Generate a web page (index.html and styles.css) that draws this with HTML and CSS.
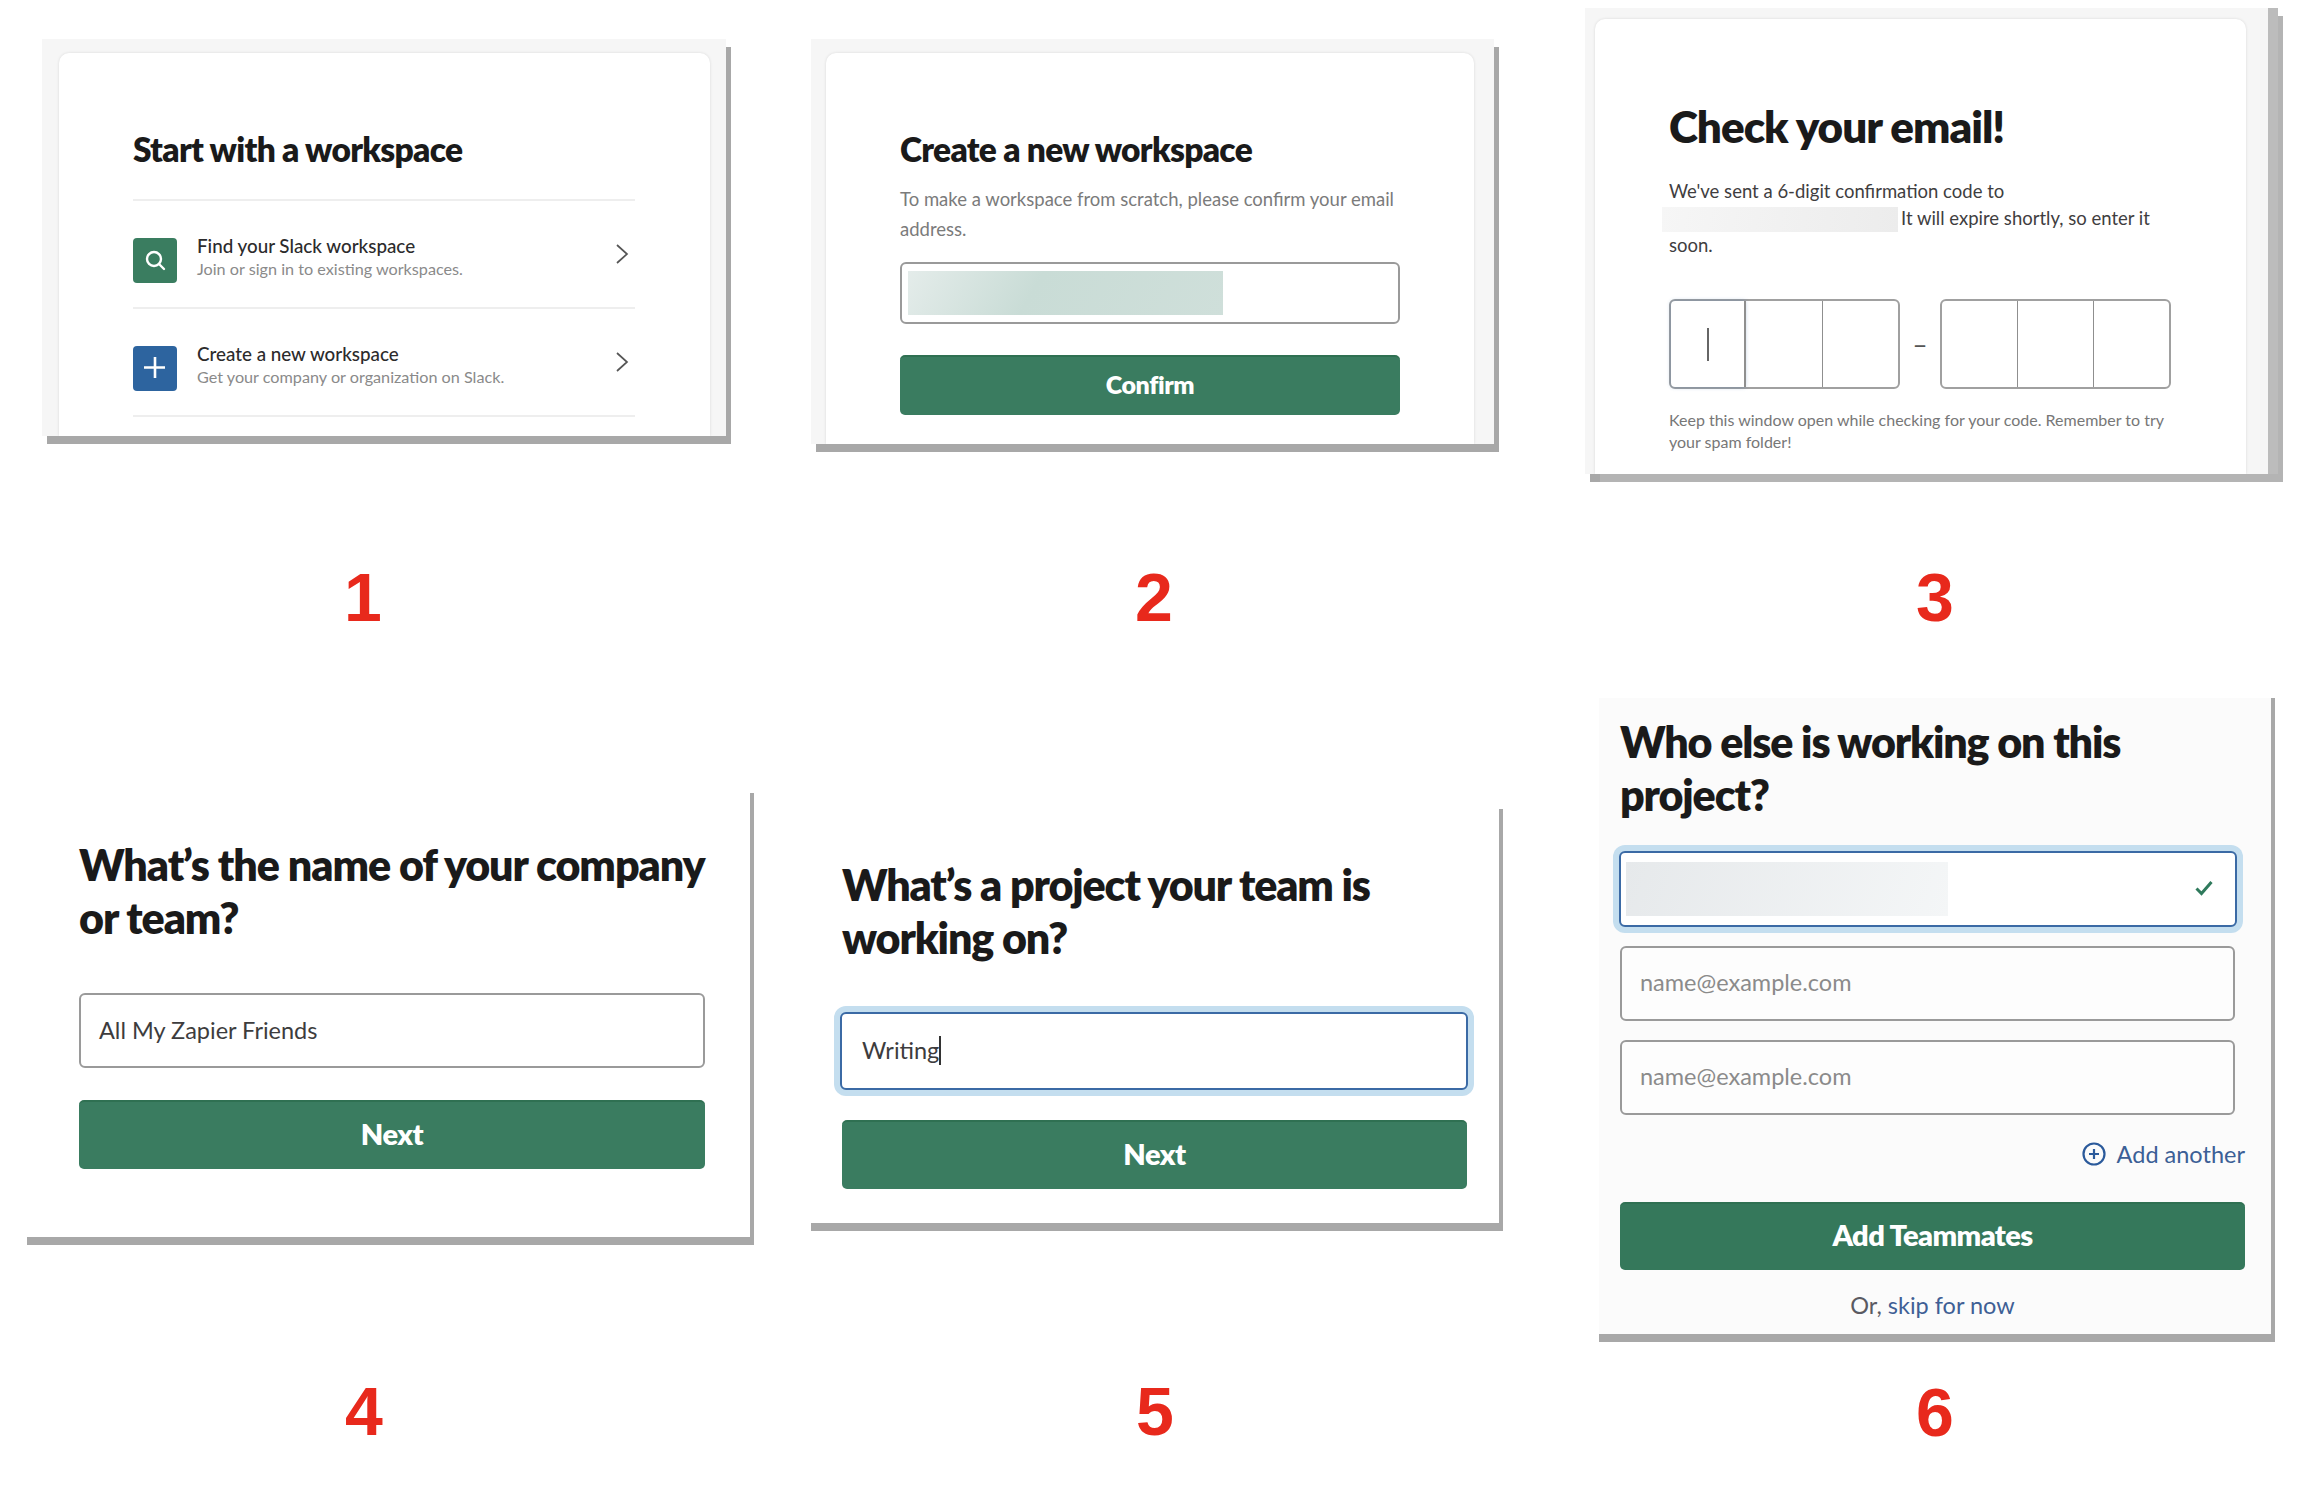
FILE: index.html
```html
<!DOCTYPE html>
<html lang="en">
<head>
    <meta charset="UTF-8">
    <title>Slack workspace sign up steps</title>
    <link rel="stylesheet" href="styles.css">
</head>
<body>
    <main class="steps">
        <section class="step step-1">
            <div class="shot shot-card">
                <div class="card">
                    <h2>Start with a workspace</h2>
                    <div class="choice">
                        <span class="choice-icon green">
                            <svg viewBox="0 0 44 44" width="44" height="44" fill="none" stroke="#fff" stroke-width="2.4" stroke-linecap="round"><circle cx="21" cy="21" r="7"/><path d="M26 26l5 5"/></svg>
                        </span>
                        <div class="choice-text">
                            <strong>Find your Slack workspace</strong>
                            <span>Join or sign in to existing workspaces.</span>
                        </div>
                        <svg class="chevron" viewBox="0 0 14 20" width="14" height="20" fill="none" stroke="#555" stroke-width="1.7"><path d="M2 1l10 9-10 9"/></svg>
                    </div>
                    <div class="choice">
                        <span class="choice-icon blue">
                            <svg viewBox="0 0 44 44" width="44" height="44" fill="none" stroke="#fff" stroke-width="2.6"><path d="M22 11v21M11 21.500h21"/></svg>
                        </span>
                        <div class="choice-text">
                            <strong>Create a new workspace</strong>
                            <span>Get your company or organization on Slack.</span>
                        </div>
                        <svg class="chevron" viewBox="0 0 14 20" width="14" height="20" fill="none" stroke="#555" stroke-width="1.7"><path d="M2 1l10 9-10 9"/></svg>
                    </div>
                </div>
            </div>
            <div class="num">1</div>
        </section>

        <section class="step step-2">
            <div class="shot shot-card">
                <div class="card">
                    <h2>Create a new workspace</h2>
                    <p class="lead">To make a workspace from scratch, please confirm your email<br>address.</p>
                    <div class="field"><span class="redact"></span></div>
                    <button class="btn">Confirm</button>
                </div>
            </div>
            <div class="num">2</div>
        </section>

        <section class="step step-3">
            <div class="shot shot-card">
                <div class="card">
                    <h2>Check your email!</h2>
                    <p class="lead">We've sent a 6-digit confirmation code to<br><span class="redact"></span>It will expire shortly, so enter it<br>soon.</p>
                    <div class="code">
                        <div class="code-group">
                            <div class="code-cell active"><i class="code-caret"></i></div>
                            <div class="code-cell"></div>
                            <div class="code-cell"></div>
                        </div>
                        <span class="code-dash">–</span>
                        <div class="code-group">
                            <div class="code-cell"></div>
                            <div class="code-cell"></div>
                            <div class="code-cell"></div>
                        </div>
                    </div>
                    <p class="note">Keep this window open while checking for your code. Remember to try<br>your spam folder!</p>
                </div>
            </div>
            <div class="num">3</div>
        </section>

        <section class="step step-4">
            <div class="shot shot-plain">
                <h2>What’s the name of your company<br>or team?</h2>
                <div class="field"><span>All My Zapier Friends</span></div>
                <button class="btn">Next</button>
            </div>
            <div class="num">4</div>
        </section>

        <section class="step step-5">
            <div class="shot shot-plain">
                <h2>What’s a project your team is<br>working on?</h2>
                <div class="field focus"><span class="typed">Writing</span></div>
                <button class="btn">Next</button>
            </div>
            <div class="num">5</div>
        </section>

        <section class="step step-6">
            <div class="shot shot-plain">
                <h2>Who else is working on this<br>project?</h2>
                <div class="field focus">
                    <span class="redact"></span>
                    <svg class="check" viewBox="0 0 18 16" width="18" height="16" fill="none" stroke="#2f7a5c" stroke-width="3"><path d="M1.500 8.500l5 5L16.500 2"/></svg>
                </div>
                <div class="field invite"><span class="placeholder">name@example.com</span></div>
                <div class="field invite"><span class="placeholder">name@example.com</span></div>
                <div class="add-row">
                    <svg viewBox="0 0 24 24" width="24" height="24" fill="none" stroke="#2b5a9b" stroke-width="2.2"><circle cx="12" cy="12" r="10.500"/><path d="M12 7v10M7 12h10"/></svg>
                    <span>Add another</span>
                </div>
                <button class="btn">Add Teammates</button>
                <p class="skip">Or, <a href="#">skip for now</a></p>
            </div>
            <div class="num">6</div>
        </section>
    </main>
</body>
</html>
```

FILE: styles.css
```css
body {
    margin: 0;
    background: #fff;
    color: #1d1c1d;
    font-family: Lato, "Open Sans", sans-serif;
}

.steps {
    display: grid;
    grid-template-columns: repeat(3, 770px);
    grid-template-rows: 680px 812px;
    width: 2310px;
    height: 1492px;
    overflow: hidden;
}

.step {
    display: flex;
    flex-direction: column;
    align-items: flex-start;
}

.num {
    color: #e8291c;
    font: bold 68px/80px "Liberation Sans", Arial, sans-serif;
}

h2 {
    margin: 0;
    font-weight: 800;
    color: #1a1a1a;
}

/* screenshot frames */
.shot {
    box-sizing: border-box;
}

.shot-card {
    padding: 14px 16px 0 17px;
    background: #f6f6f6;
    box-shadow: 5px 8px 0 #a8a8a8;
    overflow: hidden;
}

.card {
    box-sizing: border-box;
    height: 100%;
    background: #fff;
    border-radius: 10px 10px 0 0;
    box-shadow: 0 0 3px rgba(0, 0, 0, 0.12);
}

.shot-plain {
    display: flex;
    flex-direction: column;
    background: #fff;
    border-right: 4px solid #a8a8a8;
    border-bottom: 8px solid #a8a8a8;
}

/* shared controls */
.field {
    box-sizing: border-box;
    display: flex;
    align-items: center;
    border: 2px solid #9a9a9a;
    border-radius: 6px;
    background: #fff;
    color: #3d3c3d;
}

.field.focus {
    border-color: #3b6aa5;
    box-shadow: 0 0 0 6px #c4deef;
}

.btn {
    display: block;
    width: 100%;
    padding: 0 0 5px;
    border: 0;
    border-top: 2px solid #2f7052;
    border-radius: 5px;
    background: #3a7c60;
    color: #fff;
    font-family: inherit;
    font-weight: 800;
}

.redact {
    display: inline-block;
}

/* step 1 */
.step-1 .shot {
    width: 684px;
    height: 397px;
    margin: 39px 0 0 42px;
}

.step-1 .card {
    padding: 76px 75px 0 74px;
}

.step-1 h2,
.step-2 h2 {
    font-size: 33.500px;
    line-height: 40px;
    letter-spacing: -0.7px;
}

.step-1 h2 {
    padding-bottom: 30px;
    border-bottom: 2px solid #eee;
}

.choice {
    display: flex;
    box-sizing: border-box;
    height: 108px;
    padding-top: 37px;
    border-bottom: 2px solid #eee;
}

.choice-icon {
    flex: none;
    width: 44px;
    height: 45px;
    border-radius: 4px;
}

.green {
    background: #3a7d60;
}

.blue {
    background: #2d649f;
}

.choice-text {
    flex: 1;
    display: flex;
    flex-direction: column;
    margin-left: 20px;
    margin-top: -4px;
    font-size: 16.200px;
    line-height: 23px;
    color: #8a8a8a;
}

.choice-text strong {
    font-weight: 500;
    font-size: 18.800px;
    color: #2c2b2c;
}

.chevron {
    margin: 6px 6px 0 0;
}

.step-1 .num {
    margin: auto 0 43px 344px;
}

/* step 2 */
.step-2 .shot {
    width: 683px;
    height: 405px;
    margin: 39px 0 0 41px;
    padding: 14px 20px 0 15px;
}

.step-2 .card {
    padding: 76px 74px 0 74px;
}

.lead {
    margin: 0;
}

.step-2 .lead {
    margin: 15px 0 18px;
    font-size: 18.500px;
    line-height: 30px;
    color: #7b7b7b;
}

.step-2 .field {
    height: 62px;
    padding-left: 6px;
}

.step-2 .redact {
    width: 315px;
    height: 44px;
    background: linear-gradient(120deg, #e4ecea, #c9dcd6 40%, #cfdfda);
}

.step-2 .btn {
    height: 60px;
    margin-top: 31px;
    font-size: 25px;
    letter-spacing: -0.4px;
}

.step-2 .num {
    margin: auto 0 43px 365px;
}

/* step 3 */
.step-3 .shot {
    width: 683px;
    height: 466px;
    margin: 8px 0 0 45px;
    padding: 11px 22px 0 10px;
    box-shadow: 10px 0 0 #bcbcbc, 15px 8px 0 #b4b4b4, 5px 8px 0 #a8a8a8;
}

.step-3 .card {
    padding: 82px 60px 0 74px;
}

.step-3 h2 {
    font-size: 44px;
    line-height: 50px;
    letter-spacing: -1px;
}

.step-3 .lead {
    margin-top: 27px;
    font-size: 18.500px;
    line-height: 27px;
    color: #3f3e3f;
}

.step-3 .redact {
    width: 236px;
    height: 25px;
    margin: 0 3px 0 -7px;
    vertical-align: -7px;
    background: linear-gradient(100deg, #f6f6f6, #ececec);
}

.code {
    display: flex;
    align-items: center;
    margin-top: 40px;
}

.code-group {
    box-sizing: border-box;
    display: flex;
    width: 231px;
    height: 90px;
    border: 2px solid #a0a0a0;
    border-radius: 6px;
}

.code-cell {
    flex: 1;
    display: flex;
    align-items: center;
    justify-content: center;
    border-left: 1px solid #8f8f8f;
}

.code-cell:first-child {
    border-left: 0;
}

.code-cell.active {
    flex: 0 0 73px;
    border-right: 1px solid #8f8f8f;
    border-radius: 4px 0 0 4px;
    box-shadow: 0 0 4px rgba(60, 110, 170, 0.45);
}

.code-caret {
    width: 2px;
    height: 33px;
    background: #666;
}

.code-dash {
    width: 40px;
    text-align: center;
    color: #555;
    font-size: 26px;
}

.note {
    margin: 20px 0 0;
    font-size: 16px;
    line-height: 22px;
    color: #777;
}

.step-3 .num {
    margin: auto 0 43px 376px;
}

/* steps 4-6 */
.step-4 h2,
.step-5 h2,
.step-6 h2 {
    font-size: 43px;
    line-height: 53px;
    letter-spacing: -1.150px;
}

.step-4 h2 {
    letter-spacing: -1.050px;
}

.step-4 .shot,
.step-5 .shot {
    font-size: 23.500px;
}

.step-4 .field span,
.step-5 .field span {
    margin-bottom: 2px;
}

.step-6 .invite span {
    margin-bottom: 3px;
}

.step-4 .btn,
.step-5 .btn {
    height: 69px;
    font-size: 29px;
    letter-spacing: -0.5px;
}

.step-4 .shot {
    width: 727px;
    height: 452px;
    margin: 113px 0 0 27px;
    padding: 45px 45px 0 52px;
}

.step-4 .field {
    height: 75px;
    margin: 49px 0 32px;
    padding-left: 18px;
}

.step-4 .num {
    margin: auto 0 41px 345px;
}

.step-5 .shot {
    width: 692px;
    height: 422px;
    margin: 129px 0 0 41px;
    padding: 49px 32px 0 31px;
}

.step-5 .field {
    height: 78px;
    margin: 48px -1px 30px -2px;
    padding-left: 20px;
}

.typed {
    border-right: 2px solid #333;
    line-height: 29px;
}

.step-5 .num {
    margin: auto 0 41px 366px;
}

.step-6 .shot {
    width: 676px;
    height: 644px;
    margin: 18px 0 0 59px;
    padding: 17px 26px 0 21px;
    background: #fbfbfb;
}

.step-6 .field.focus {
    justify-content: space-between;
    height: 76px;
    margin: 30px 8px 19px -1px;
    padding: 0 22px 0 5px;
}

.step-6 .redact {
    width: 322px;
    height: 54px;
    background: linear-gradient(110deg, #e6e9eb, #f4f6f7);
}

.check {
    margin-top: -3px;
}

.invite {
    height: 75px;
    margin: 0 10px 19px 0;
    padding-left: 18px;
    background: #fdfdfd;
}

.placeholder {
    color: #8b8b8b;
    font-size: 23.500px;
}

.add-row {
    display: flex;
    align-items: center;
    justify-content: flex-end;
    gap: 11px;
    height: 24px;
    margin: 8px 0 36px;
    color: #3c5f96;
    font-size: 23.500px;
}

.step-6 .btn {
    flex: none;
    height: 68px;
    padding-bottom: 6px;
    font-size: 29px;
    letter-spacing: -0.6px;
    background: #35785b;
}

.skip {
    margin: 21px 0 0;
    text-align: center;
    font-size: 23.500px;
    line-height: 28px;
    color: #5a5a62;
}

.skip a {
    color: #3f5f95;
    text-decoration: none;
}

.step-6 .num {
    margin: auto 0 40px 376px;
}
```
